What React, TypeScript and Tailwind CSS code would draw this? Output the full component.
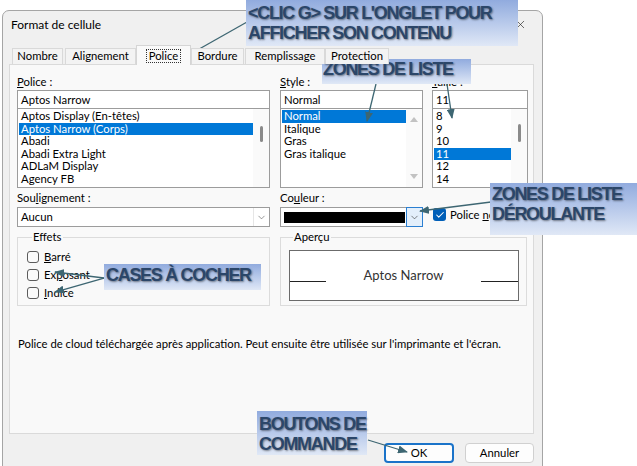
import React from 'react';
import { X, ChevronDown, Check } from 'lucide-react';

const tabs = [
  { label: 'Nombre', w: 'w-[51px]', ml: '' },
  { label: 'Alignement', w: 'w-[71px]', ml: 'ml-[2px]' },
  { label: 'Police', w: 'w-[55px]', ml: '' },
  { label: 'Bordure', w: 'w-[53px]', ml: '' },
  { label: 'Remplissage', w: 'w-[80px]', ml: 'ml-px' },
  { label: 'Protection', w: 'w-[64px]', ml: '' },
];

const fonts = ['Aptos Display (En-têtes)', 'Aptos Narrow (Corps)', 'Abadi', 'Abadi Extra Light', 'ADLaM Display', 'Agency FB'];
const styles = ['Normal', 'Italique', 'Gras', 'Gras italique'];
const sizes = ['8', '9', '10', '11', '12', '14'];

const ListItems = ({ items, selected }: { items: string[]; selected: number }) => (
  <div className="flex-1 pt-px pl-px">
    {items.map((item, i) => (
      <div
        key={item}
        className={`h-[12.5px] leading-[12.5px] pl-[2px] whitespace-nowrap ${
          i === selected ? 'bg-[#0078d7] text-white' : 'text-black'
        }`}
      >
        {item}
      </div>
    ))}
  </div>
);

const Callout = ({ className, lines }: { className: string; lines: string[] }) => (
  <div
    className={`absolute bg-linear-to-b from-[#91abde] to-[#e0e8f6] font-['Liberation_Sans',Arial,sans-serif] font-bold text-[18px] leading-[20px] tracking-[-1.3px] text-[#2b4669] whitespace-nowrap [text-shadow:1px_1px_2px_rgba(0,0,0,0.45)] ${className}`}
  >
    {lines.map((l) => (
      <div key={l}>{l}</div>
    ))}
  </div>
);

const EffectCheck = ({ children }: { children: React.ReactNode }) => (
  <div className="h-[18px] flex items-center">
    <div className="w-[12px] h-[12px] rounded-[3px] border border-[#5c5c5c] bg-[#fbfbfb]" />
    <span className="ml-[5px]">{children}</span>
  </div>
);

export default function App() {
  return (
    <div className="relative w-[637px] h-[466px] bg-white overflow-hidden font-['Lato',sans-serif] text-[11.3px] text-black">
      {/* dialog */}
      <div className="ml-[2px] mt-[10px] w-[541px] h-[470px] bg-[#f0f0f0] border border-[#a5a5a5] rounded-t-[7px] flex flex-col">
        <div className="h-[26px] flex items-center justify-between pl-[8px] pr-[15px]">
          <span className="text-[12px] mt-px">Format de cellule</span>
          <X size={13} strokeWidth={1.2} className="text-[#222]" />
        </div>

        {/* tabs */}
        <div className="mt-[8px] h-[19px] flex items-end pl-[9px] relative z-10">
          {tabs.map((t) =>
            t.label === 'Police' ? (
              <div
                key={t.label}
                className={`${t.w} h-[20px] -mb-px bg-[#f9f9f9] border border-b-0 border-[#d5d5d5] flex items-center justify-center`}
              >
                <span className="border border-dotted border-[#333] px-[2px] leading-[12px]">Police</span>
              </div>
            ) : (
              <div
                key={t.label}
                className={`${t.w} ${t.ml} h-[16px] bg-[#f3f3f3] border border-b-0 border-[#d9d9d9] flex items-center justify-center`}
              >
                {t.label}
              </div>
            )
          )}
        </div>

        {/* panel */}
        <div className="ml-[6px] mr-[8px] h-[370px] bg-[#f9f9f9] border border-[#dadada] pl-[7px] pt-[10px]">
          <div className="flex">
            <div className="w-[253px]">
              <div className="leading-[14px]"><u>P</u>olice :</div>
              <div className="mt-px h-[19px] bg-white border border-[#9c9c9c] pl-[3px] leading-[17px]">Aptos Narrow</div>
              <div className="h-[79px] bg-white border border-t-0 border-[#9c9c9c] flex">
                <ListItems items={fonts} selected={1} />
                <div className="w-[16px] bg-[#fafafa] flex justify-center pt-[17px]">
                  <div className="w-[3px] h-[16px] bg-[#8a8a8a] rounded-full" />
                </div>
              </div>
            </div>
            <div className="w-[143px] ml-[10px]">
              <div className="leading-[14px]"><u>S</u>tyle :</div>
              <div className="mt-px h-[19px] bg-white border border-[#9c9c9c] pl-[3px] leading-[17px]">Normal</div>
              <div className="h-[79px] bg-white border border-t-0 border-[#9c9c9c] flex">
                <ListItems items={styles} selected={0} />
                <div className="w-[16px] bg-[#fafafa] flex flex-col items-center justify-between py-[8px]">
                  <svg width="8" height="5" viewBox="0 0 8 5"><path d="M0 5 L4 0 L8 5 Z" fill="#c2c2c2" /></svg>
                  <svg width="8" height="5" viewBox="0 0 8 5"><path d="M0 0 L4 5 L8 0 Z" fill="#c2c2c2" /></svg>
                </div>
              </div>
            </div>
            <div className="w-[96px] ml-[9px]">
              <div className="leading-[14px]"><u>T</u>aille :</div>
              <div className="mt-px h-[19px] bg-white border border-[#9c9c9c] pl-[3px] leading-[17px]">11</div>
              <div className="h-[79px] bg-white border border-t-0 border-[#9c9c9c] flex">
                <ListItems items={sizes} selected={3} />
                <div className="w-[16px] bg-[#fafafa] flex justify-center pt-[15px]">
                  <div className="w-[3px] h-[18px] bg-[#8a8a8a] rounded-full" />
                </div>
              </div>
            </div>
          </div>

          {/* row 2 */}
          <div className="flex mt-[3px]">
            <div className="w-[253px]">
              <div className="leading-[14px]">Sou<u>l</u>ignement :</div>
              <div className="mt-[2px] h-[20px] bg-white border border-[#9c9c9c] flex">
                <div className="flex-1 pl-[3px] leading-[18px]">Aucun</div>
                <div className="w-[16px] border-l border-[#e6e6e6] flex items-center justify-center">
                  <ChevronDown size={11} strokeWidth={1.3} className="text-[#555]" />
                </div>
              </div>
            </div>
            <div className="w-[143px] ml-[10px]">
              <div className="leading-[14px]">Co<u>u</u>leur :</div>
              <div className="mt-[2px] h-[20px] bg-white border border-[#9c9c9c] flex items-center pl-[3px]">
                <div className="w-[121px] h-[11px] bg-black" />
                <div className="ml-auto -mr-px w-[17px] h-[20px] bg-[#e3effb] border border-[#2b7fd1] flex items-center justify-center">
                  <ChevronDown size={11} strokeWidth={1.3} className="text-[#333]" />
                </div>
              </div>
            </div>
            <div className="ml-[10px] pt-[17px] flex items-start">
              <div className="w-[13px] h-[13px] rounded-[3px] bg-[#005fb8] flex items-center justify-center">
                <Check size={10} strokeWidth={2.5} className="text-white" />
              </div>
              <span className="ml-[4px] leading-[13px]">Police <u>n</u>ormale</span>
            </div>
          </div>

          {/* group boxes */}
          <div className="flex mt-[3px]">
            <fieldset className="w-[253px] border border-[#dcdcdc] pl-[9px] pt-[4px] pb-[3px]">
              <legend className="ml-[5px] px-px leading-[14px]">Effets</legend>
              <EffectCheck><u>B</u>arré</EffectCheck>
              <EffectCheck>Ex<u>p</u>osant</EffectCheck>
              <EffectCheck><u>I</u>ndice</EffectCheck>
            </fieldset>
            <fieldset className="w-[247px] ml-[10px] border border-[#dcdcdc] pl-[8px] pt-[6px] pb-[4px]">
              <legend className="ml-[4px] px-px leading-[14px]">Aperçu</legend>
              <div className="w-[230px] h-[51px] bg-white border border-[#6b6b6b] flex items-center">
                <div className="w-[36px] h-px bg-[#222] mt-[11px]" />
                <div className="flex-1 text-center text-[13px] text-[#333]">Aptos Narrow</div>
                <div className="w-[37px] h-px bg-[#222] mt-[11px]" />
              </div>
            </fieldset>
          </div>

          <div className="mt-[31px] leading-[14px] pl-px">
            Police de cloud téléchargée après application. Peut ensuite être utilisée sur l'imprimante et l'écran.
          </div>
        </div>

        {/* buttons */}
        <div className="mt-[9px] mr-[8px] flex justify-end gap-[11px]">
          <div className="w-[70px] h-[20px] rounded-[4px] bg-[#fdfdfd] border-2 border-[#1a73c9] flex items-center justify-center">
            OK
          </div>
          <div className="w-[69px] h-[20px] rounded-[4px] bg-[#fdfdfd] border border-[#d0d0d0] flex items-center justify-center">
            Annuler
          </div>
        </div>
      </div>

      {/* arrows */}
      <svg className="absolute left-0 top-0 pointer-events-none" width={637} height={466}>
        <defs>
          <marker id="ah" markerWidth="10" markerHeight="8" refX="9" refY="4" orient="auto" markerUnits="userSpaceOnUse">
            <path d="M0,0 L10,4 L0,8 Z" fill="#3d6672" />
          </marker>
        </defs>
        <g stroke="#3d6672" strokeWidth="1.3" markerEnd="url(#ah)">
          <line x1="247" y1="22" x2="178" y2="61" />
          <line x1="376" y1="84" x2="367" y2="121" />
          <line x1="447" y1="84" x2="452" y2="118" />
          <line x1="491" y1="202" x2="420" y2="211" />
          <line x1="104" y1="278" x2="55" y2="272" />
          <line x1="104" y1="278" x2="55" y2="292" />
          <line x1="368" y1="440" x2="407" y2="452" />
        </g>
      </svg>

      {/* callouts */}
      <Callout className="left-[246px] top-0 w-[272px] h-[46px] pl-[2px] pt-[3px]" lines={["<CLIC G> SUR L'ONGLET POUR", 'AFFICHER SON CONTENU']} />
      <Callout className="left-[322px] top-[59px] w-[149px] h-[25px] pl-px" lines={['ZONES DE LISTE']} />
      <Callout className="left-[490px] top-[183px] w-[147px] h-[52px] pl-[2px] pt-px" lines={['ZONES DE LISTE', 'DÉROULANTE']} />
      <Callout className="left-[104px] top-[264px] w-[157px] h-[26px] pl-[2px] pt-px" lines={['CASES À COCHER']} />
      <Callout className="left-[257px] top-[411px] w-[110px] h-[44px] pl-[2px] pt-[3px]" lines={['BOUTONS DE', 'COMMANDE']} />
    </div>
  );
}
